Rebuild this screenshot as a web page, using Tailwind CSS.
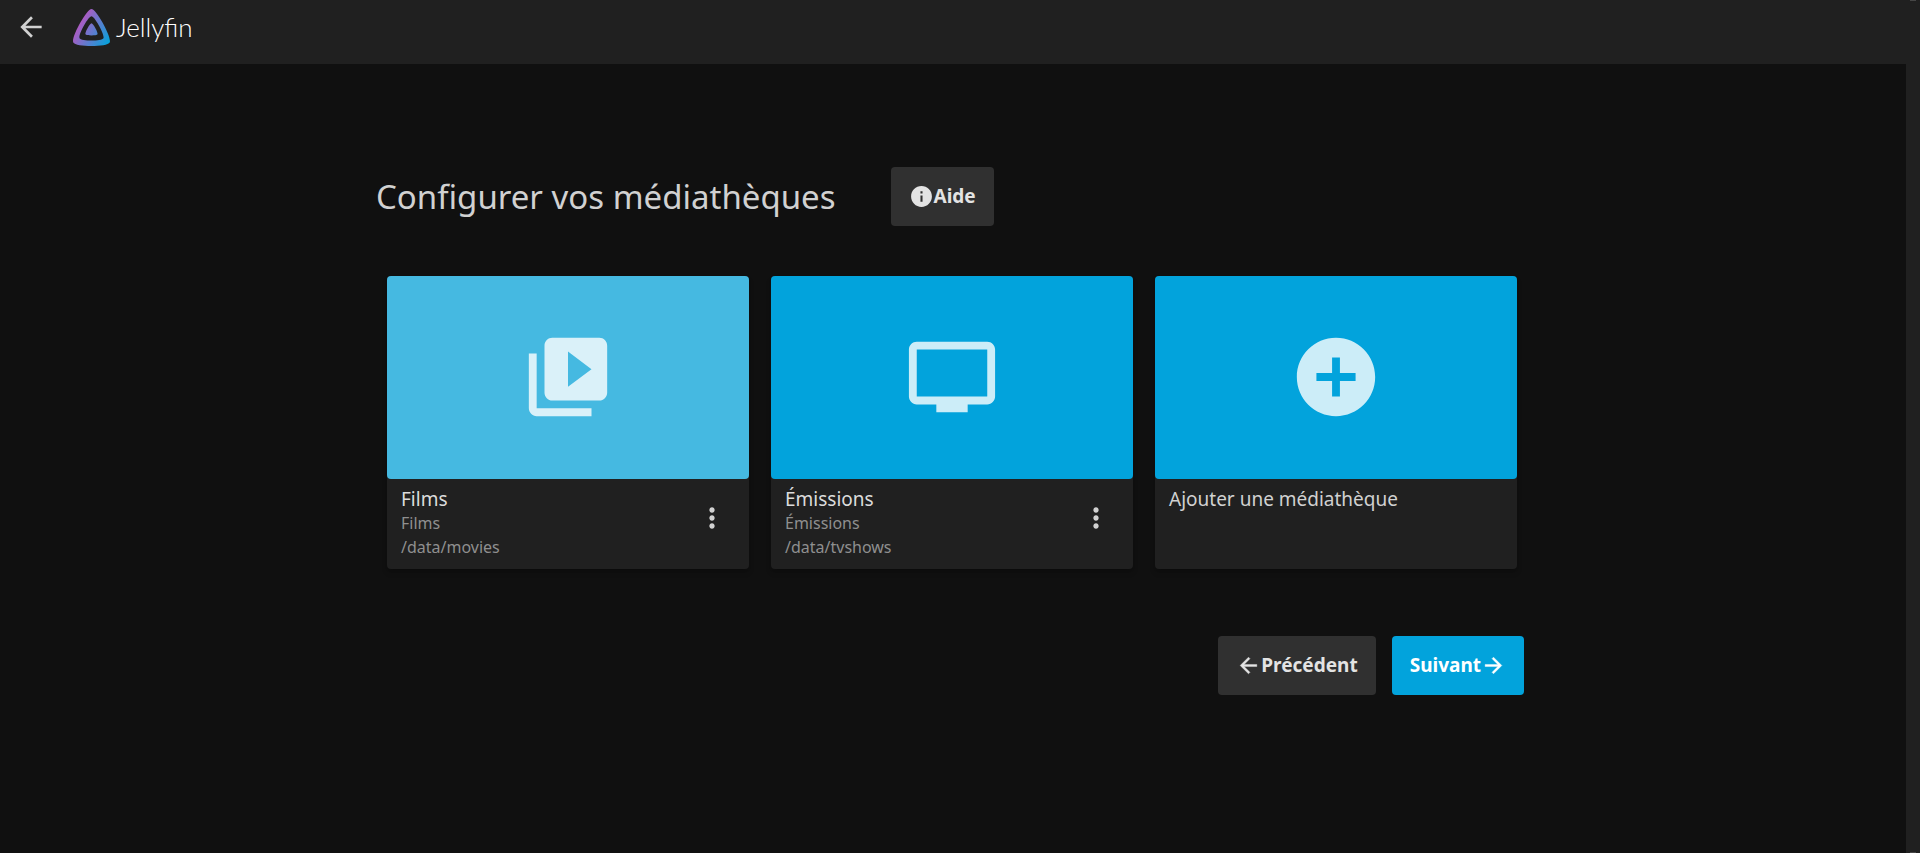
<!DOCTYPE html>
<html lang="fr">
<head>
<meta charset="utf-8">
<meta name="viewport" content="width=device-width, initial-scale=1">
<title>Jellyfin</title>
<script src="https://cdn.jsdelivr.net/npm/@tailwindcss/browser@4"></script>
</head>
<body class="flex min-h-screen bg-[#202020] font-['Noto_Sans',sans-serif] text-[#d1d1d1]">
<div class="flex min-w-0 flex-1 flex-col">
  <header class="flex h-16 items-start gap-[26px] bg-[#202020] px-[15px]">
    <button type="button" aria-label="Retour" class="mt-[11px]">
      <svg class="size-8" viewBox="0 0 24 24" fill="currentColor"><path d="M20 11H7.830l5.590-5.590L12 4l-8 8 8 8 1.410-1.410L7.830 13H20v-2z"/></svg>
    </button>
    <a href="#" class="mt-[9px] flex items-start gap-[6px]">
      <svg class="size-[37px]" viewBox="24 23 464 466" aria-hidden="true">
        <defs><linearGradient id="g" gradientUnits="userSpaceOnUse" x1="110.25" y1="213.3" x2="496.14" y2="436.09"><stop offset="0" stop-color="#aa5cc3"/><stop offset="1" stop-color="#00a4dc"/></linearGradient></defs>
        <path fill="url(#g)" d="M256,201.6c-20.4,0-86.2,119.3-76.2,139.4s142.5,19.9,152.4,0S276.5,201.6,256,201.6z"/>
        <path fill="url(#g)" fill-rule="evenodd" d="M256,23.3c-61.6,0-259.8,359.4-229.6,420.1s429.2,60,459.1,0S317.6,23.3,256,23.3z M406.5,390.8c-19.6,39.3-281.1,39.8-300.9,0s110.1-275.3,150.4-275.3S426.1,351.4,406.5,390.8z"/>
      </svg>
      <span class="font-['Lato',sans-serif] text-[26px] leading-9 font-light text-white">Jellyfin</span>
    </a>
  </header>
  <main class="flex-1 bg-[#101010] pt-[103px] pr-[382px] pb-10 pl-[376px]">
    <div class="flex items-center gap-[55px]">
      <h1 class="text-[33px] leading-10">Configurer vos médiathèques</h1>
      <a href="#" class="flex h-[59px] items-center rounded bg-[#303030] px-[18px] text-[19px] font-bold text-[#e3e3e3]">
        <svg class="size-[25px]" viewBox="0 0 24 24" fill="currentColor"><path d="M12 2C6.480 2 2 6.480 2 12s4.480 10 10 10 10-4.480 10-10S17.520 2 12 2zm1 15h-2v-6h2v6zm0-8h-2V7h2v2z"/></svg>
        Aide
      </a>
    </div>
    <div class="mt-[50px] mr-[7px] ml-[11px] grid grid-cols-3 gap-[22px]">
      <section class="flex flex-col rounded bg-[#202020] shadow-md shadow-black/20">
        <button type="button" aria-label="Films" class="flex aspect-[362/203] items-center justify-center rounded bg-[#45b9e1] pb-px text-white/80">
          <svg class="size-[94px]" viewBox="0 0 24 24" fill="currentColor"><path d="M4 6H2v14c0 1.100.9 2 2 2h14v-2H4V6zm16-4H8c-1.100 0-2 .9-2 2v12c0 1.100.9 2 2 2h12c1.100 0 2-.9 2-2V4c0-1.100-.9-2-2-2zm-8 12.500v-9l6 4.500-6 4.500z"/></svg>
        </button>
        <div class="flex h-[90px] items-start justify-between pt-2 pr-[21px] pl-[14px]">
          <div>
            <h2 class="text-[19px] leading-6 text-[#dcdcdc]">Films</h2>
            <p class="text-base leading-6 text-[#8f8f8f]">Films</p>
            <p class="text-base leading-6 text-[#8f8f8f]">/data/movies</p>
          </div>
          <button type="button" aria-label="Menu de Films" class="mt-[15px]">
            <svg class="size-8" viewBox="0 0 24 24" fill="currentColor"><path d="M12 8c1.100 0 2-.9 2-2s-.9-2-2-2-2 .9-2 2 .9 2 2 2zm0 2c-1.100 0-2 .9-2 2s.9 2 2 2 2-.9 2-2-.9-2-2-2zm0 6c-1.100 0-2 .9-2 2s.9 2 2 2 2-.9 2-2-.9-2-2-2z"/></svg>
          </button>
        </div>
      </section>
      <section class="flex flex-col rounded bg-[#202020] shadow-md shadow-black/20">
        <button type="button" aria-label="Émissions" class="flex aspect-[362/203] items-center justify-center rounded bg-[#02a3dc] pb-px text-white/80">
          <svg class="size-[94px]" viewBox="0 0 24 24" fill="currentColor"><path d="M21 3H3c-1.100 0-2 .9-2 2v12c0 1.100.9 2 2 2h5v2h8v-2h5c1.100 0 2-.9 2-2V5c0-1.100-.9-2-2-2zm0 14H3V5h18v12z"/></svg>
        </button>
        <div class="flex h-[90px] items-start justify-between pt-2 pr-[21px] pl-[14px]">
          <div>
            <h2 class="text-[19px] leading-6 text-[#dcdcdc]">Émissions</h2>
            <p class="text-base leading-6 text-[#8f8f8f]">Émissions</p>
            <p class="text-base leading-6 text-[#8f8f8f]">/data/tvshows</p>
          </div>
          <button type="button" aria-label="Menu de Émissions" class="mt-[15px]">
            <svg class="size-8" viewBox="0 0 24 24" fill="currentColor"><path d="M12 8c1.100 0 2-.9 2-2s-.9-2-2-2-2 .9-2 2 .9 2 2 2zm0 2c-1.100 0-2 .9-2 2s.9 2 2 2 2-.9 2-2-.9-2-2-2zm0 6c-1.100 0-2 .9-2 2s.9 2 2 2 2-.9 2-2-.9-2-2-2z"/></svg>
          </button>
        </div>
      </section>
      <section class="flex flex-col rounded bg-[#202020] shadow-md shadow-black/20">
        <button type="button" aria-label="Ajouter une médiathèque" class="flex aspect-[362/203] items-center justify-center rounded bg-[#02a3dc] pb-px text-white/80">
          <svg class="size-[94px]" viewBox="0 0 24 24" fill="currentColor"><path d="M12 2C6.480 2 2 6.480 2 12s4.480 10 10 10 10-4.480 10-10S17.520 2 12 2zm5 11h-4v4h-2v-4H7v-2h4V7h2v4h4v2z"/></svg>
        </button>
        <div class="h-[90px] px-[14px] pt-2">
          <h2 class="text-[19px] leading-6">Ajouter une médiathèque</h2>
        </div>
      </section>
    </div>
    <div class="mt-[67px] flex justify-end gap-4">
      <button type="button" class="flex h-[59px] items-center rounded bg-[#303030] px-[18px] text-[19px] font-bold text-[#e3e3e3]">
        <svg class="size-[25px]" viewBox="0 0 24 24" fill="currentColor" stroke="currentColor" stroke-width="0.4"><path d="M20 11H7.830l5.590-5.590L12 4l-8 8 8 8 1.410-1.410L7.830 13H20v-2z"/></svg>
        Précédent
      </button>
      <button type="button" class="flex h-[59px] items-center rounded bg-[#02a3dc] px-[18px] text-[19px] font-bold text-white">
        Suivant
        <svg class="size-[25px]" viewBox="0 0 24 24" fill="currentColor" stroke="currentColor" stroke-width="0.4"><path d="M12 4l-1.410 1.410L16.170 11H4v2h12.170l-5.580 5.590L12 20l8-8z"/></svg>
      </button>
    </div>
  </main>
</div>
<div class="flex w-[14px] shrink-0 flex-col items-center justify-between" aria-hidden="true">
  <span class="h-px w-[6px] bg-[#464646]"></span>
  <span class="h-px w-[6px] bg-[#464646]"></span>
</div>
</body>
</html>
